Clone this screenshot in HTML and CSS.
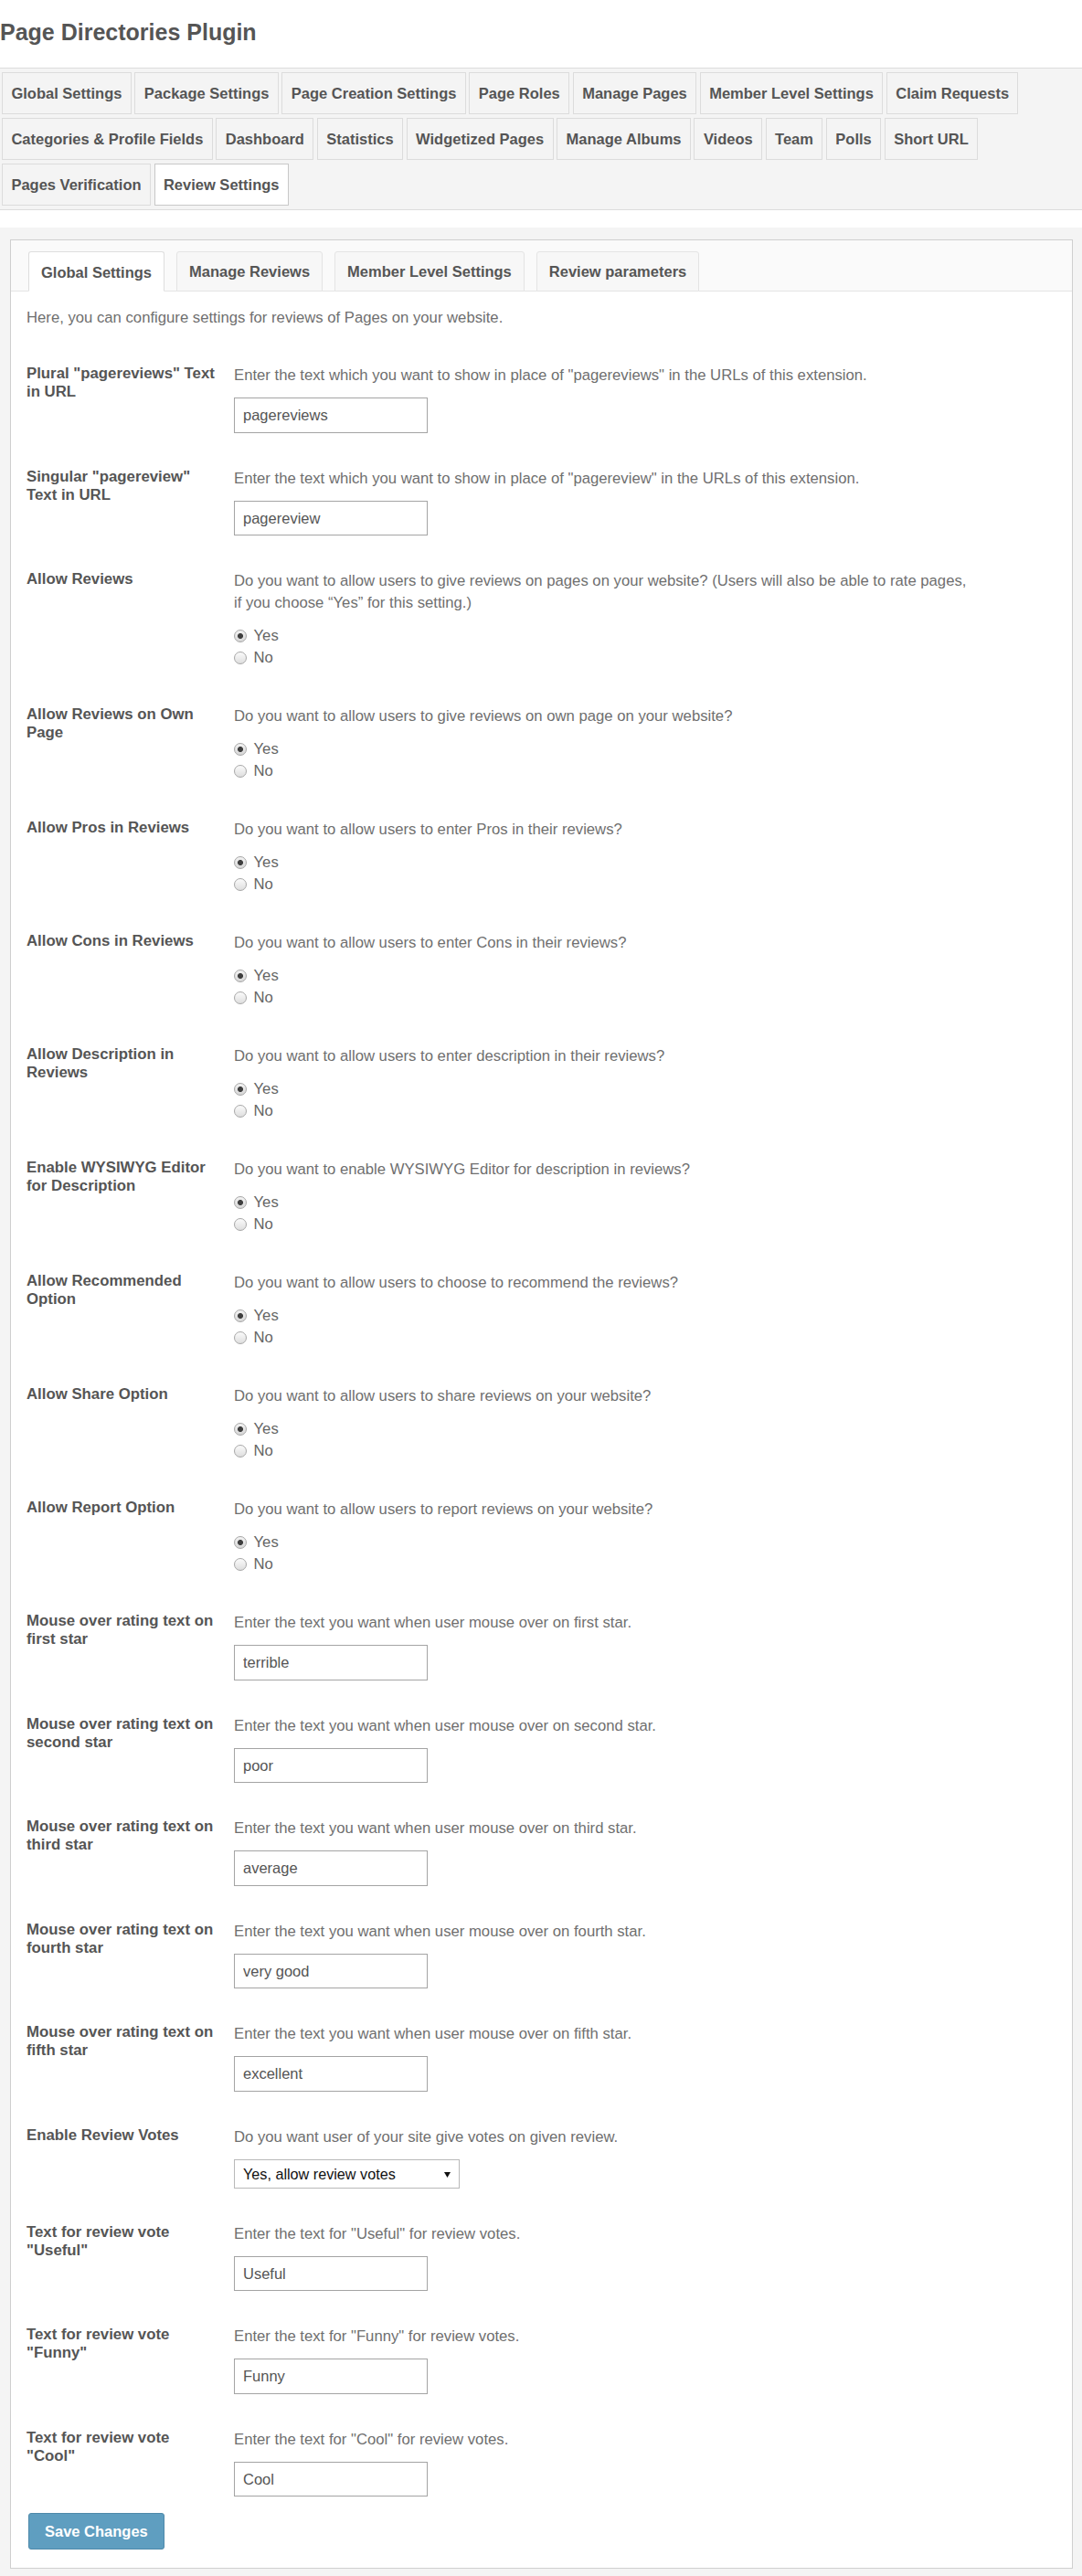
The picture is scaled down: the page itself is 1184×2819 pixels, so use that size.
FILE: index.html
```html
<!DOCTYPE html>
<html lang="en">
<head>
<meta charset="utf-8">
<title>Page Directories Plugin</title>
<link rel="stylesheet" href="styles.css">
</head>
<body>
<h2 class="page-title">Page Directories Plugin</h2>

<nav class="main-nav">
  <a class="nav-tab">Global Settings</a>
  <a class="nav-tab">Package Settings</a>
  <a class="nav-tab">Page Creation Settings</a>
  <a class="nav-tab">Page Roles</a>
  <a class="nav-tab">Manage Pages</a>
  <a class="nav-tab">Member Level Settings</a>
  <a class="nav-tab">Claim Requests</a>
  <a class="nav-tab">Categories &amp; Profile Fields</a>
  <a class="nav-tab">Dashboard</a>
  <a class="nav-tab">Statistics</a>
  <a class="nav-tab">Widgetized Pages</a>
  <a class="nav-tab">Manage Albums</a>
  <a class="nav-tab">Videos</a>
  <a class="nav-tab">Team</a>
  <a class="nav-tab">Polls</a>
  <a class="nav-tab">Short URL</a>
  <a class="nav-tab">Pages Verification</a>
  <a class="nav-tab active">Review Settings</a>
</nav>

<div class="settings-area">
  <div class="panel">
    <div class="sub-tabs">
      <a class="sub-tab active">Global Settings</a>
      <a class="sub-tab">Manage Reviews</a>
      <a class="sub-tab">Member Level Settings</a>
      <a class="sub-tab">Review parameters</a>
    </div>

    <form class="panel-body">
      <p class="intro">Here, you can configure settings for reviews of Pages on your website.</p>

      <div class="form-row">
        <div class="form-label">Plural "pagereviews" Text in URL</div>
        <div class="form-element">
          <p class="description">Enter the text which you want to show in place of "pagereviews" in the URLs of this extension.</p>
          <input class="text-input" type="text" value="pagereviews">
        </div>
      </div>

      <div class="form-row">
        <div class="form-label">Singular "pagereview" Text in URL</div>
        <div class="form-element">
          <p class="description">Enter the text which you want to show in place of "pagereview" in the URLs of this extension.</p>
          <input class="text-input" type="text" value="pagereview">
        </div>
      </div>

      <div class="form-row">
        <div class="form-label">Allow Reviews</div>
        <div class="form-element">
          <p class="description">Do you want to allow users to give reviews on pages on your website? (Users will also be able to rate pages, if you choose “Yes” for this setting.)</p>
          <div class="radio-list">
            <label class="radio-option"><input class="radio" type="radio" name="r1" checked>Yes</label>
            <label class="radio-option"><input class="radio" type="radio" name="r1">No</label>
          </div>
        </div>
      </div>

      <div class="form-row">
        <div class="form-label">Allow Reviews on Own Page</div>
        <div class="form-element">
          <p class="description">Do you want to allow users to give reviews on own page on your website?</p>
          <div class="radio-list">
            <label class="radio-option"><input class="radio" type="radio" name="r2" checked>Yes</label>
            <label class="radio-option"><input class="radio" type="radio" name="r2">No</label>
          </div>
        </div>
      </div>

      <div class="form-row">
        <div class="form-label">Allow Pros in Reviews</div>
        <div class="form-element">
          <p class="description">Do you want to allow users to enter Pros in their reviews?</p>
          <div class="radio-list">
            <label class="radio-option"><input class="radio" type="radio" name="r3" checked>Yes</label>
            <label class="radio-option"><input class="radio" type="radio" name="r3">No</label>
          </div>
        </div>
      </div>

      <div class="form-row">
        <div class="form-label">Allow Cons in Reviews</div>
        <div class="form-element">
          <p class="description">Do you want to allow users to enter Cons in their reviews?</p>
          <div class="radio-list">
            <label class="radio-option"><input class="radio" type="radio" name="r4" checked>Yes</label>
            <label class="radio-option"><input class="radio" type="radio" name="r4">No</label>
          </div>
        </div>
      </div>

      <div class="form-row">
        <div class="form-label">Allow Description in Reviews</div>
        <div class="form-element">
          <p class="description">Do you want to allow users to enter description in their reviews?</p>
          <div class="radio-list">
            <label class="radio-option"><input class="radio" type="radio" name="r5" checked>Yes</label>
            <label class="radio-option"><input class="radio" type="radio" name="r5">No</label>
          </div>
        </div>
      </div>

      <div class="form-row">
        <div class="form-label">Enable WYSIWYG Editor for Description</div>
        <div class="form-element">
          <p class="description">Do you want to enable WYSIWYG Editor for description in reviews?</p>
          <div class="radio-list">
            <label class="radio-option"><input class="radio" type="radio" name="r6" checked>Yes</label>
            <label class="radio-option"><input class="radio" type="radio" name="r6">No</label>
          </div>
        </div>
      </div>

      <div class="form-row">
        <div class="form-label">Allow Recommended Option</div>
        <div class="form-element">
          <p class="description">Do you want to allow users to choose to recommend the reviews?</p>
          <div class="radio-list">
            <label class="radio-option"><input class="radio" type="radio" name="r7" checked>Yes</label>
            <label class="radio-option"><input class="radio" type="radio" name="r7">No</label>
          </div>
        </div>
      </div>

      <div class="form-row">
        <div class="form-label">Allow Share Option</div>
        <div class="form-element">
          <p class="description">Do you want to allow users to share reviews on your website?</p>
          <div class="radio-list">
            <label class="radio-option"><input class="radio" type="radio" name="r8" checked>Yes</label>
            <label class="radio-option"><input class="radio" type="radio" name="r8">No</label>
          </div>
        </div>
      </div>

      <div class="form-row">
        <div class="form-label">Allow Report Option</div>
        <div class="form-element">
          <p class="description">Do you want to allow users to report reviews on your website?</p>
          <div class="radio-list">
            <label class="radio-option"><input class="radio" type="radio" name="r9" checked>Yes</label>
            <label class="radio-option"><input class="radio" type="radio" name="r9">No</label>
          </div>
        </div>
      </div>

      <div class="form-row">
        <div class="form-label">Mouse over rating text on first star</div>
        <div class="form-element">
          <p class="description">Enter the text you want when user mouse over on first star.</p>
          <input class="text-input" type="text" value="terrible">
        </div>
      </div>

      <div class="form-row">
        <div class="form-label">Mouse over rating text on second star</div>
        <div class="form-element">
          <p class="description">Enter the text you want when user mouse over on second star.</p>
          <input class="text-input" type="text" value="poor">
        </div>
      </div>

      <div class="form-row">
        <div class="form-label">Mouse over rating text on third star</div>
        <div class="form-element">
          <p class="description">Enter the text you want when user mouse over on third star.</p>
          <input class="text-input" type="text" value="average">
        </div>
      </div>

      <div class="form-row">
        <div class="form-label">Mouse over rating text on fourth star</div>
        <div class="form-element">
          <p class="description">Enter the text you want when user mouse over on fourth star.</p>
          <input class="text-input" type="text" value="very good">
        </div>
      </div>

      <div class="form-row">
        <div class="form-label">Mouse over rating text on fifth star</div>
        <div class="form-element">
          <p class="description">Enter the text you want when user mouse over on fifth star.</p>
          <input class="text-input" type="text" value="excellent">
        </div>
      </div>

      <div class="form-row">
        <div class="form-label">Enable Review Votes</div>
        <div class="form-element">
          <p class="description">Do you want user of your site give votes on given review.</p>
          <div class="select-wrap">
            <select class="select-input">
              <option selected>Yes, allow review votes</option>
              <option>No, do not allow review votes</option>
            </select>
            <svg class="select-arrow" width="7" height="6" viewBox="0 0 7 6"><path d="M0 0H7L3.5 6Z" fill="#111"/></svg>
          </div>
        </div>
      </div>

      <div class="form-row">
        <div class="form-label">Text for review vote "Useful"</div>
        <div class="form-element">
          <p class="description">Enter the text for "Useful" for review votes.</p>
          <input class="text-input" type="text" value="Useful">
        </div>
      </div>

      <div class="form-row">
        <div class="form-label">Text for review vote "Funny"</div>
        <div class="form-element">
          <p class="description">Enter the text for "Funny" for review votes.</p>
          <input class="text-input" type="text" value="Funny">
        </div>
      </div>

      <div class="form-row">
        <div class="form-label">Text for review vote "Cool"</div>
        <div class="form-element">
          <p class="description">Enter the text for "Cool" for review votes.</p>
          <input class="text-input" type="text" value="Cool">
        </div>
      </div>

      <div class="form-actions">
        <button class="save-btn" type="button">Save Changes</button>
      </div>
    </form>
  </div>
</div>
</body>
</html>
```

FILE: styles.css
```css
* {
  box-sizing: border-box;
}

html, body {
  margin: 0;
  padding: 0;
  background: #fff;
}

body {
  font-family: "Liberation Sans", Arial, Helvetica, sans-serif;
  font-size: 16.5px;
  color: #555;
}

.page-title {
  margin: 0 0 24px 0;
  padding-top: 20px;
  font-size: 25px;
  line-height: 30px;
  font-weight: bold;
  color: #555;
}

/* top navigation */
.main-nav {
  display: flex;
  flex-wrap: wrap;
  gap: 4px 3.6px;
  padding: 4px 2px;
  background: #f4f4f4;
  border-top: 1px solid #dcdcdc;
  border-bottom: 1px solid #dcdcdc;
}

.nav-tab {
  display: block;
  height: 46px;
  padding: 0 9.4px;
  border: 1px solid #dcdcdc;
  background: #f4f4f4;
  line-height: 44px;
  font-weight: bold;
  font-size: 16.5px;
  color: #555;
  white-space: nowrap;
}

.nav-tab.active {
  background: #fff;
  border-color: #c8c8c8;
}

/* settings area */
.settings-area {
  margin-top: 19px;
  background: #f4f4f4;
  padding: 13px 10px 9px 11px;
}

.panel {
  background: #fff;
  border: 1px solid #cfcfcf;
}

.sub-tabs {
  display: flex;
  gap: 13px;
  padding: 12px 19px 0;
  background: #fafafa;
  border-bottom: 1px solid #e4e4e4;
}

.sub-tab {
  display: block;
  height: 44px;
  margin-bottom: -1px;
  padding: 0 13px;
  border: 1px solid #e4e4e4;
  border-radius: 3px 3px 0 0;
  background: #f7f7f7;
  line-height: 42px;
  font-weight: bold;
  font-size: 16.5px;
  color: #555;
  white-space: nowrap;
}

.sub-tab.active {
  background: #fff;
  border-color: #dedede;
  border-bottom-color: #fff;
  padding-top: 1px;
}

.panel-body {
  display: block;
  margin: 0;
  padding: 17px 17px 20px 17px;
}

.intro {
  margin: 0 0 19.4px 0;
  font-size: 16.7px;
  line-height: 24px;
  color: #6f6f6f;
}

.form-row {
  display: flex;
  padding: 20px 0 18px 0;
}

.form-label {
  flex: 0 0 227px;
  padding-right: 16px;
  font-weight: bold;
  font-size: 16.8px;
  line-height: 20px;
  color: #555;
}

.form-element {
  flex: 1 1 auto;
  min-width: 0;
}

.description {
  margin: 0 0 12px 0;
  max-width: 808px;
  font-size: 16.7px;
  line-height: 24px;
  color: #6f6f6f;
}

.text-input {
  display: block;
  width: 212px;
  height: 38.5px;
  margin: 0;
  padding: 0 9px;
  border: 1px solid #a4a4a4;
  border-radius: 0;
  background: #fff;
  font-family: inherit;
  font-size: 16.5px;
  color: #555;
  outline: none;
}

.radio-list {
  display: flex;
  flex-direction: column;
  padding-bottom: 2px;
}

.radio-option {
  display: flex;
  align-items: center;
  gap: 7.5px;
  height: 24px;
  font-size: 16.7px;
  color: #666;
}

.radio {
  -webkit-appearance: none;
  appearance: none;
  width: 14px;
  height: 14px;
  margin: 0;
  border: 1px solid #a7a7a7;
  border-radius: 50%;
  background: linear-gradient(#fbfbfb, #dedede);
  flex: 0 0 14px;
}

.radio:checked {
  background: radial-gradient(circle, #3f3f3f 0, #3f3f3f 2.6px, rgba(0,0,0,0) 3.4px), linear-gradient(#f3f3f3, #d6d6d6);
}

.select-wrap {
  position: relative;
  display: inline-block;
  vertical-align: top;
}

.select-input {
  -webkit-appearance: none;
  appearance: none;
  display: block;
  width: 247px;
  height: 32px;
  margin: 0;
  padding: 0 24px 0 9px;
  border: 1px solid #b9b9b9;
  border-radius: 0;
  background: #fff;
  font-family: inherit;
  font-size: 16.2px;
  color: #111;
  outline: none;
}

.select-arrow {
  position: absolute;
  right: 10px;
  top: 14px;
}

.form-actions {
  padding-left: 2px;
}

.save-btn {
  display: block;
  height: 40px;
  margin: 0;
  padding: 0 17px;
  border: 1px solid #4e89aa;
  border-radius: 3px;
  background: #5f9ec0;
  font-family: inherit;
  font-size: 16.5px;
  font-weight: bold;
  color: #fff;
  cursor: pointer;
}
```
